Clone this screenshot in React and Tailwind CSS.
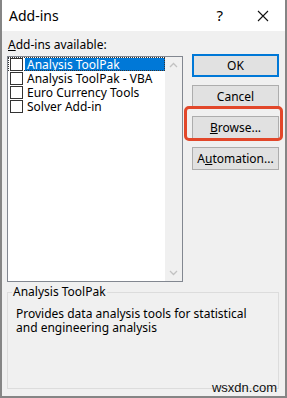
import React from "react";

const font = { fontFamily: '"Noto Sans", "Open Sans", sans-serif' };

function Check() {
  return <span className="block w-[13px] h-[13px] border border-[#333333] bg-white shrink-0" />;
}

function Btn({ children, primary }) {
  return (
    <div
      className={
        "h-[23px] w-[87px] bg-[#e1e1e1] flex items-center justify-center text-[12px] leading-[14px] text-black " +
        (primary ? "border-2 border-[#0078d7]" : "border border-[#adadad]")
      }
    >
      {children}
    </div>
  );
}

export default function App() {
  const items = ["Analysis ToolPak", "Analysis ToolPak - VBA", "Euro Currency Tools", "Solver Add-in"];
  return (
    <div
      className="relative w-[287px] h-[398px] bg-[#f0f0f0] border-x-2 border-b-2 border-[#858585] overflow-hidden flex flex-col"
      style={font}
    >
      {/* title bar */}
      <div className="h-[31px] bg-white flex items-center shrink-0">
        <span className="ml-[7px] text-[14px] text-black leading-none">Add-ins</span>
        <span className="ml-auto mr-[34px] text-[15px] text-black leading-none">?</span>
        <svg width="12" height="12" viewBox="0 0 12 12" className="mr-[16px]">
          <path d="M1 1 L11 11 M11 1 L1 11" stroke="#111" strokeWidth="1.1" />
        </svg>
      </div>

      {/* body */}
      <div className="flex pt-[6px] pl-[5px]">
        <div className="flex flex-col w-[176px]">
          <div className="h-[16px] text-[12px] leading-[16px] text-black pl-[1px]">
            <span className="underline">A</span>dd-ins available:
          </div>
          <div className="mt-[3px] h-[226px] border border-[#828790] bg-white flex">
            <div className="flex-1 flex flex-col">
              {items.map((t, i) => (
                <div
                  key={t}
                  className={
                    "h-[14px] flex items-center pl-[2px] " +
                    (i === 0 ? "outline outline-1 outline-dotted outline-[#333] -outline-offset-1" : "")
                  }
                >
                  <Check />
                  <span
                    className={
                      "ml-[2px] h-[13px] flex items-center pl-[2px] pr-[4px] text-[12px] leading-[13px] " +
                      (i === 0 ? "bg-[#0078d7] text-white flex-1" : "text-black")
                    }
                  >
                    {t}
                  </span>
                </div>
              ))}
            </div>
            <div className="w-[17px] bg-[#f0f0f0] flex flex-col items-center justify-between py-[5px]">
              <svg width="9" height="6" viewBox="0 0 9 6">
                <path d="M1 5 L4.5 1.5 L8 5" stroke="#c2c2c2" strokeWidth="1.3" fill="none" />
              </svg>
              <svg width="9" height="6" viewBox="0 0 9 6">
                <path d="M1 1 L4.5 4.5 L8 1" stroke="#c2c2c2" strokeWidth="1.3" fill="none" />
              </svg>
            </div>
          </div>
        </div>

        <div className="ml-[9px] mt-[17px] flex flex-col gap-[8px]">
          <Btn primary>OK</Btn>
          <Btn>Cancel</Btn>
          <div className="relative">
            <Btn>
              <span><span className="underline">B</span>rowse...</span>
            </Btn>
            <div className="absolute left-[-8px] top-[-10px] w-[99px] h-[35px] border-[3px] border-[#e2472a] rounded-[5px]" />
          </div>
          <Btn>
            <span>A<span className="underline">u</span>tomation...</span>
          </Btn>
        </div>
      </div>

      {/* group box */}
      <div className="relative mt-[10px] ml-[5px] w-[272px] h-[97px] border border-[#dcdcdc]">
        <span className="absolute left-[4px] top-[-9px] px-[1px] bg-[#f0f0f0] text-[12px] leading-[16px] text-black">
          Analysis ToolPak
        </span>
        <p className="mt-[14px] ml-[8px] w-[250px] text-[12px] leading-[14px] text-black">
          Provides data analysis tools for statistical and engineering analysis
        </p>
      </div>

      <span
        className="absolute right-[8px] bottom-[1px] text-[13px] leading-[14px] text-[#111]"
        style={{ fontFamily: '"Liberation Sans", Arial, sans-serif' }}
      >
        wsxdn.com
      </span>
    </div>
  );
}
